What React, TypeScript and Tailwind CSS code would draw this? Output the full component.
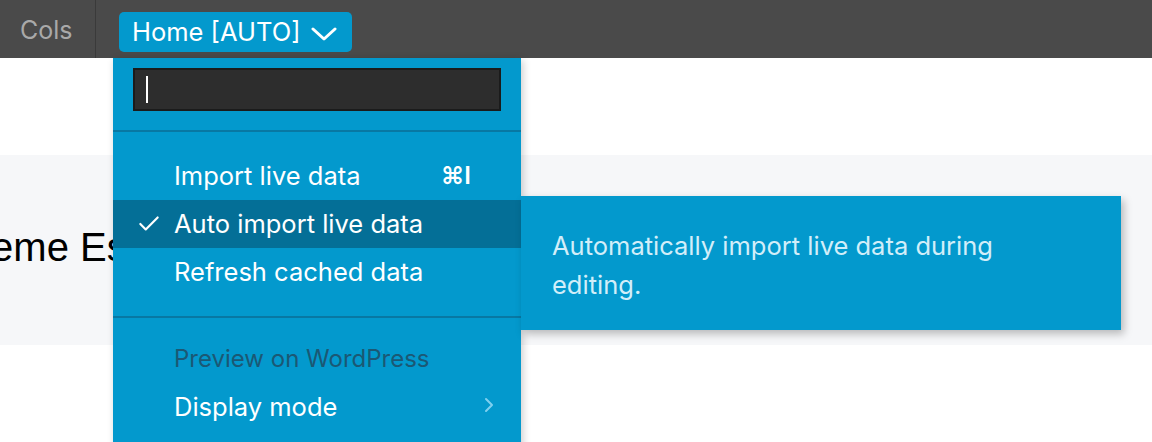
import React from 'react';
import { ChevronRight, Check } from 'lucide-react';

const font = { fontFamily: 'Inter, "Noto Sans", sans-serif' };

const App = () => {
    return (
        <div className="relative w-[1152px] h-[442px] overflow-hidden bg-white" style={font}>
            {/* Top bar */}
            <div className="flex h-[58px] items-start bg-[#4a4a4a]">
                <div className="flex h-full w-[96px] items-center border-r border-[#3a3a3a] pl-[20px] pt-[4px] text-[25px] text-[#a9a9a9]">
                    Cols
                </div>
                <button className="ml-[23px] mt-[12px] flex h-[40px] items-center gap-[10px] rounded-[5px] bg-[#0399cd] pl-[13px] pr-[15px] text-[25.5px] text-white">
                    Home [AUTO]
                    <svg width="26" height="14" viewBox="0 0 26 14" fill="none" className="mt-[3px]">
                        <polyline points="2,2 13,12 24,2" stroke="white" strokeWidth="3" strokeLinecap="round" strokeLinejoin="round" />
                    </svg>
                </button>
            </div>

            {/* Page content */}
            <div className="mt-[97px] flex h-[190px] items-center bg-[#f6f7f9]">
                <div className="-ml-[80px] -mt-[6px] whitespace-nowrap text-[40px] text-black" style={{ fontFamily: '"Liberation Sans", Arial, sans-serif' }}>
                    Extreme Es
                </div>
            </div>

            {/* Dropdown menu */}
            <div className="absolute left-[113px] top-[58px] w-[408px] h-[390px] bg-[#0399cd] shadow-[2px_2px_8px_rgba(0,0,0,0.2)]">
                <div className="px-[20px] pt-[10px] pb-[19px]">
                    <div className="flex h-[43px] items-center border-2 border-[#1b1b1b] bg-[#2d2d2d] pl-[11px]">
                        <div className="h-[27px] w-[2px] bg-white" />
                    </div>
                </div>
                <div className="border-t-2 border-[#0878a3] pt-[20px] pb-[20px]">
                    <div className="flex h-[48px] items-center justify-between pl-[61px] pr-[50px] text-[25.5px] text-white">
                        <span>Import live data</span>
                        <span className="text-[24px] font-semibold">⌘I</span>
                    </div>
                    <div className="relative flex h-[48px] items-center bg-[#046f97] pl-[61px] text-[25.5px] text-white">
                        <Check size={26} strokeWidth={2} className="absolute left-[23px]" />
                        <span>Auto import live data</span>
                    </div>
                    <div className="flex h-[48px] items-center pl-[61px] text-[25.5px] text-white">
                        <span>Refresh cached data</span>
                    </div>
                </div>
                <div className="border-t-2 border-[#0878a3] pt-[17px]">
                    <div className="flex h-[48px] items-center pl-[61px] text-[24px] text-[#1b5874]">
                        Preview on WordPress
                    </div>
                    <div className="flex h-[48px] items-center justify-between pl-[61px] pr-[20px] text-[25.5px] text-white">
                        <span>Display mode</span>
                        <ChevronRight size={24} strokeWidth={2} className="-mt-[4px] text-[#7fd0ef]" />
                    </div>
                </div>
            </div>

            {/* Tooltip */}
            <div className="absolute left-[521px] top-[196px] w-[600px] h-[134px] bg-[#0399cd] px-[31px] pt-[30px] text-[25.5px] leading-[39px] text-[#d2eef9] shadow-[3px_4px_8px_rgba(0,0,0,0.25)]">
                Automatically import live data during
                <br />
                editing.
            </div>
        </div>
    );
};

export default App;
